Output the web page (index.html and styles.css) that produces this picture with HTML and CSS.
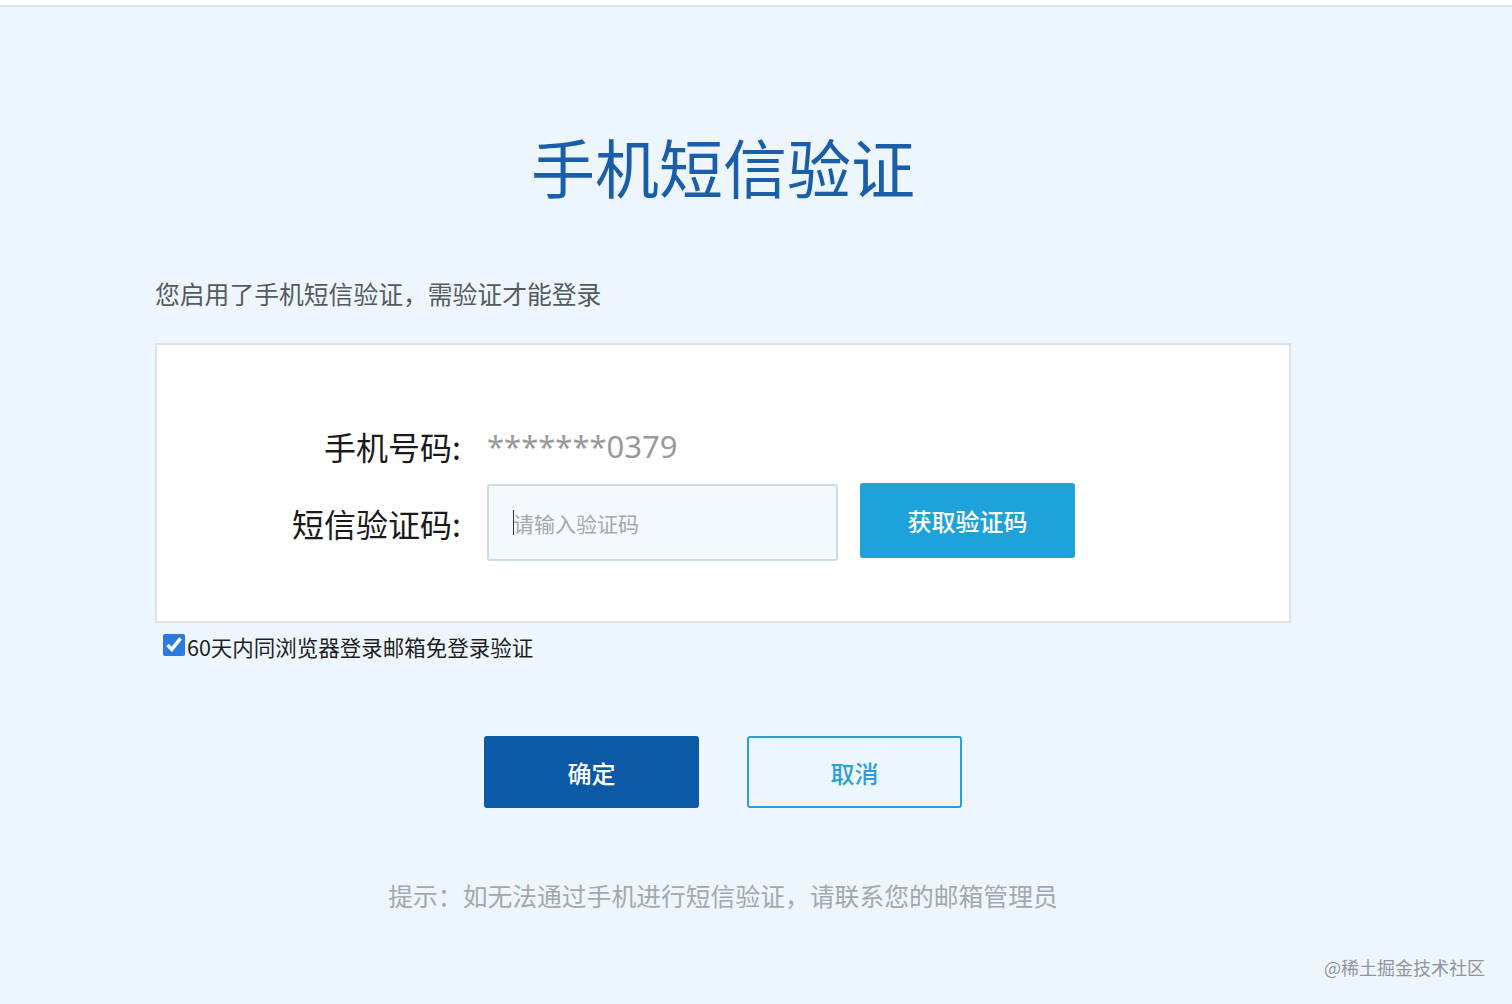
FILE: index.html
```html
<!DOCTYPE html>
<html lang="zh-CN">
<head>
<meta charset="utf-8">
<title>手机短信验证</title>
<link rel="stylesheet" href="styles.css">
</head>
<body>
<div class="topbar"></div>
<main class="page">
  <h1 class="title">手机短信验证</h1>
  <p class="intro">您启用了手机短信验证，需验证才能登录</p>
  <section class="card">
    <div class="form">
      <div class="label">手机号码:</div>
      <div class="value">*******0379</div>
      <div class="label">短信验证码:</div>
      <div class="field">
        <div class="code-wrap">
          <span class="caret"></span>
          <input class="code-input" type="text" placeholder="请输入验证码">
        </div>
        <button class="btn-get" type="button">获取验证码</button>
      </div>
    </div>
  </section>
  <label class="remember">
    <input type="checkbox" checked>
    <span>60天内同浏览器登录邮箱免登录验证</span>
  </label>
  <div class="actions">
    <button class="btn-ok" type="button">确定</button>
    <button class="btn-cancel" type="button">取消</button>
  </div>
  <p class="hint">提示：如无法通过手机进行短信验证，请联系您的邮箱管理员</p>
</main>
<div class="watermark">@稀土掘金技术社区</div>
</body>
</html>
```
FILE: styles.css
```css
html, body {
  margin: 0;
  padding: 0;
}
body {
  background: #eef6fd;
  font-family: "Noto Sans CJK SC", "Noto Sans", sans-serif;
  height: 1004px;
  overflow: hidden;
  position: relative;
}
.topbar {
  height: 5px;
  background: #ffffff;
  border-bottom: 2px solid #dfe3e8;
}
.page {
  width: 1136px;
  margin-left: 155px;
  display: flex;
  flex-direction: column;
}
.title {
  margin: 120px 0 0;
  font-size: 64px;
  line-height: 76px;
  font-weight: 400;
  color: #1a5da8;
  text-align: center;
}
.intro {
  margin: 73px 0 0;
  font-size: 24.8px;
  line-height: 34px;
  color: #555a60;
}
.card {
  margin-top: 33px;
  height: 276px;
  background: #ffffff;
  border: 2px solid #dde3ea;
  box-sizing: content-box;
}
.form {
  display: grid;
  grid-template-columns: 304px auto;
  grid-template-rows: 40px 77px;
  column-gap: 26px;
  row-gap: 18px;
  align-items: center;
  padding-top: 81px;
}
.label {
  text-align: right;
  font-size: 32px;
  line-height: 40px;
  color: #1a1a1a;
}
.value {
  font-family: "Noto Sans", "Noto Sans CJK SC", sans-serif;
  font-size: 31px;
  line-height: 40px;
  color: #9a9a9a;
}
.field {
  display: flex;
  align-items: flex-start;
  gap: 22px;
  height: 77px;
}
.code-wrap {
  position: relative;
}
.caret {
  position: absolute;
  left: 26px;
  top: 26px;
  width: 1px;
  height: 25px;
  background: #333;
}
.code-input {
  width: 351px;
  height: 77px;
  box-sizing: border-box;
  border: 2px solid #d0dae2;
  border-radius: 3px;
  background: #f3f9fd;
  padding: 0 24px;
  font-family: "Noto Sans CJK SC", sans-serif;
  font-size: 21px;
  color: #333;
  outline: none;
}
.code-input::placeholder {
  color: #a3a8ae;
}
.btn-get {
  width: 215px;
  height: 75px;
  margin-top: -1px;
  border: none;
  border-radius: 3px;
  background: #1ea2da;
  color: #ffffff;
  font-family: "Noto Sans CJK SC", sans-serif;
  font-size: 24px;
  font-weight: 500;
}
.remember {
  display: flex;
  align-items: center;
  margin: 10px 0 0 8px;
  height: 26px;
  font-size: 21.5px;
  color: #1f1f1f;
}
.remember input {
  width: 22px;
  height: 22px;
  margin: 0 2px 2px 0;
  accent-color: #2a7ae2;
}
.actions {
  display: flex;
  justify-content: center;
  gap: 48px;
  margin-top: 77px;
}
.btn-ok, .btn-cancel {
  width: 215px;
  height: 72px;
  box-sizing: border-box;
  border-radius: 3px;
  font-family: "Noto Sans CJK SC", sans-serif;
  font-size: 24px;
  font-weight: 500;
}
.btn-ok {
  border: none;
  background: #0c5aa6;
  color: #ffffff;
}
.btn-cancel {
  border: 2px solid #2ba0d8;
  background: transparent;
  color: #2ba0d8;
}
.hint {
  margin: 70px 0 0;
  text-align: center;
  font-size: 24.8px;
  line-height: 34px;
  color: #a2a8ae;
}
.watermark {
  position: absolute;
  right: 27px;
  top: 954px;
  font-size: 18px;
  line-height: 26px;
  color: #8f959b;
}
```
